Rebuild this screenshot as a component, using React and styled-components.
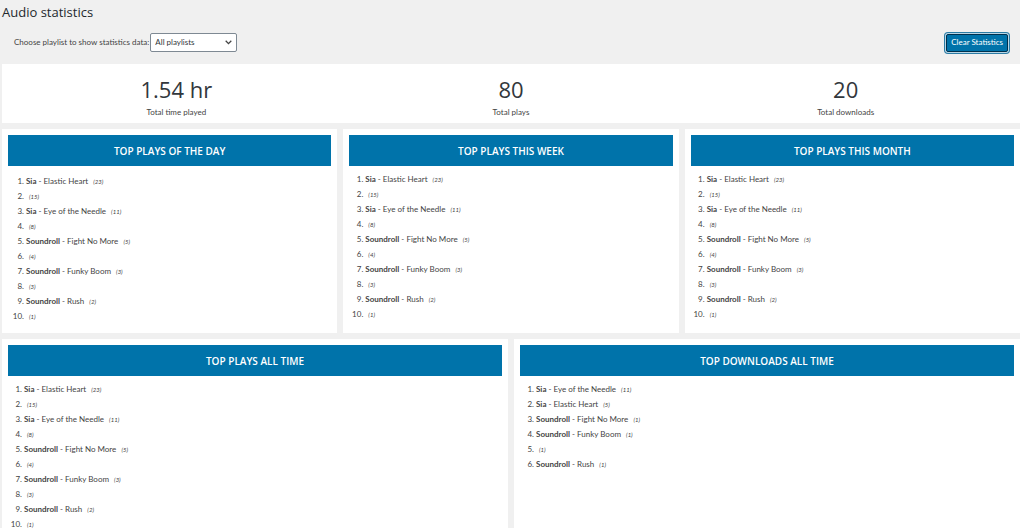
// Dependencies
import React, { Component } from 'react';

// Styles
import styled, { createGlobalStyle } from 'styled-components';

const GlobalStyle = createGlobalStyle`
	html {
		background: #f0f0f0;
		scrollbar-width: none;
	}

	body {
		margin: 0;
		color: #444444;
		font-family: Lato, 'Open Sans', sans-serif;
		font-size: 8px;
		line-height: 15px;
	}

	* {
		box-sizing: border-box;
	}
`;

const Page = styled.main`
	display: flex;
	flex-direction: column;
	gap: 6px;
	padding: 2px 0 6px 2px;
`;

const Header = styled.header`
	display: flex;
	flex-direction: column;
`;

const Title = styled.h1`
	margin: 0;
	color: #23282d;
	font-family: 'Open Sans', sans-serif;
	font-size: 13px;
	font-weight: 400;
	line-height: 20px;
`;

const Toolbar = styled.div`
	display: flex;
	justify-content: space-between;
	align-items: center;
	padding: 11px 12px 6px;
`;

const PlaylistField = styled.div`
	display: flex;
	align-items: center;
	gap: 1px;
`;

const SelectWrap = styled.div`
	display: grid;
	align-items: center;

	> * {
		grid-area: 1 / 1;
	}
`;

const Select = styled.select`
	appearance: none;
	width: 87px;
	height: 19px;
	padding: 0 16px 0 4px;
	border: 1px solid #7e8993;
	border-radius: 2px;
	background: #ffffff;
	color: #32373c;
	font: inherit;
	line-height: 15px;
`;

const Chevron = styled.svg`
	justify-self: end;
	width: 7px;
	height: 5px;
	margin-right: 5px;
	pointer-events: none;
`;

const ClearButton = styled.button`
	height: 18px;
	padding: 0 4px;
	border: 1px solid #00304d;
	border-radius: 2px;
	background: #0073aa;
	color: #ffffff;
	font: inherit;
	line-height: 15px;
	box-shadow: 0 0 0 1px #b9d6e5, 0 0 0 2px #2b7ca6;
`;

const Summary = styled.section`
	display: grid;
	grid-template-columns: repeat(3, 1fr);
	padding: 9px 7px 3px;
	background: #ffffff;
	text-align: center;
`;

const Stat = styled.div`
	display: flex;
	flex-direction: column;
`;

const StatValue = styled.strong`
	color: #32373c;
	font-family: 'Open Sans', sans-serif;
	font-size: 22px;
	font-weight: 400;
	line-height: 32px;
`;

const StatLabel = styled.span``;

const CardRow = styled.div`
	display: grid;
	grid-template-columns: repeat(${props => props.$columns}, 1fr);
	gap: 6px;
`;

const Card = styled.section`
	padding: 6px 6px 9px;
	background: #ffffff;
`;

const CardTitle = styled.h2`
	margin: 0;
	padding-top: 1px;
	background: #0073aa;
	color: #ffffff;
	font-family: 'Open Sans', sans-serif;
	font-size: 10px;
	font-weight: 600;
	line-height: 30px;
	text-align: center;
	text-transform: uppercase;
`;

const TrackList = styled.ol`
	margin: 0;
	padding: ${props => (props.$inset ? '8px 0 0 18px' : '6px 0 0 16px')};
`;

const Artist = styled.b`
	font-weight: 700;
`;

const Count = styled.i`
	margin-left: 3px;
	font-size: 6px;
	line-height: 1;
`;

const plays = [
	{ artist: 'Sia', song: 'Elastic Heart', count: 23 },
	{ count: 15 },
	{ artist: 'Sia', song: 'Eye of the Needle', count: 11 },
	{ count: 8 },
	{ artist: 'Soundroll', song: 'Fight No More', count: 5 },
	{ count: 4 },
	{ artist: 'Soundroll', song: 'Funky Boom', count: 3 },
	{ count: 3 },
	{ artist: 'Soundroll', song: 'Rush', count: 2 },
	{ count: 1 }
];

const downloads = [
	{ artist: 'Sia', song: 'Eye of the Needle', count: 11 },
	{ artist: 'Sia', song: 'Elastic Heart', count: 5 },
	{ artist: 'Soundroll', song: 'Fight No More', count: 1 },
	{ artist: 'Soundroll', song: 'Funky Boom', count: 1 },
	{ count: 1 },
	{ artist: 'Soundroll', song: 'Rush', count: 1 }
];

const stats = [
	{ value: '1.54 hr', label: 'Total time played' },
	{ value: '80', label: 'Total plays' },
	{ value: '20', label: 'Total downloads' }
];

const TopCard = ({ title, tracks, inset }) => (
	<Card>
		<CardTitle>{title}</CardTitle>
		<TrackList $inset={inset}>
			{tracks.map((track, index) => (
				<li key={index}>
					{track.artist && (
						<React.Fragment>
							<Artist>{track.artist}</Artist>
							{` - ${track.song} `}
						</React.Fragment>
					)}
					<Count>({track.count})</Count>
				</li>
			))}
		</TrackList>
	</Card>
);

class App extends Component {
	state = {
		playlist: 'all'
	};

	changeHandler = event => {
		this.setState({ [event.target.name]: event.target.value });
	};

	render() {
		return (
			<Page>
				<GlobalStyle />

				<Header>
					<Title>Audio statistics</Title>
					<Toolbar>
						<PlaylistField>
							<label htmlFor="playlist">
								Choose playlist to show statistics data:
							</label>
							<SelectWrap>
								<Select
									id="playlist"
									name="playlist"
									value={this.state.playlist}
									onChange={this.changeHandler}
								>
									<option value="all">All playlists</option>
								</Select>
								<Chevron viewBox="0 0 7 5" aria-hidden="true">
									<path
										d="M0.7 0.8 3.5 3.6 6.3 0.8"
										fill="none"
										stroke="#444444"
										strokeWidth="1.3"
									/>
								</Chevron>
							</SelectWrap>
						</PlaylistField>
						<ClearButton type="button">Clear Statistics</ClearButton>
					</Toolbar>
				</Header>

				<Summary>
					{stats.map(stat => (
						<Stat key={stat.label}>
							<StatValue>{stat.value}</StatValue>
							<StatLabel>{stat.label}</StatLabel>
						</Stat>
					))}
				</Summary>

				<CardRow $columns={3}>
					<TopCard title="Top plays of the day" tracks={plays} inset />
					<TopCard title="Top plays this week" tracks={plays} />
					<TopCard title="Top plays this month" tracks={plays} />
				</CardRow>

				<CardRow $columns={2}>
					<TopCard title="Top plays all time" tracks={plays} />
					<TopCard title="Top downloads all time" tracks={downloads} />
				</CardRow>
			</Page>
		);
	}
}

export default App;
